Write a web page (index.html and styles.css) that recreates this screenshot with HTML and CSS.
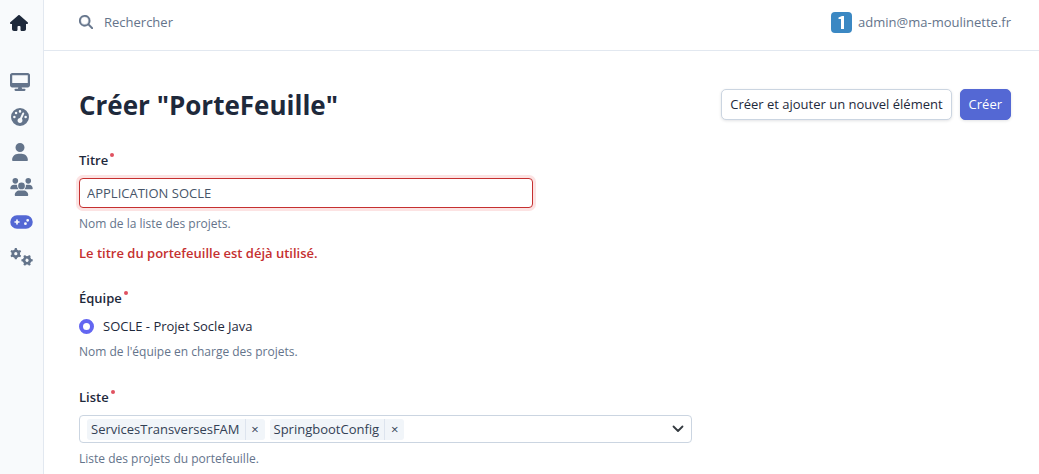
FILE: index.html
```html
<!DOCTYPE html>
<html lang="fr">
<head>
<meta charset="utf-8">
<meta name="viewport" content="width=device-width, initial-scale=1">
<title>Créer "PorteFeuille"</title>
<link rel="stylesheet" href="styles.css">
</head>
<body>
<div class="layout">
  <aside class="sidebar">
    <a class="home" href="#" aria-label="Accueil">
      <svg width="18" height="16" viewBox="0 0 576 512"><path d="M575.800 255.500c0 18-15 32.100-32 32.100h-32l.7 160.200c0 35-28 64.200-64 64.200H376c-22 0-40-18-40-40v-88c0-17.700-14.300-32-32-32h-32c-17.700 0-32 14.300-32 32v88c0 22-18 40-40 40h-72c-35 0-64-29-64-64V287.600H32c-18 0-32-14-32-32.100 0-9 3-17 10-24L266.400 8c7-7 15-8 22-8s15 2 21 7l255.400 224.500c8 7 12 15 11 24z"/></svg>
    </a>
    <nav class="menu">
      <a href="#" aria-label="Tableau de bord">
        <svg width="20" height="18" viewBox="0 0 576 512"><path fill-rule="evenodd" d="M64 0C29 0 0 29 0 64v288c0 35 29 64 64 64h176l-11 32h-69a32 32 0 0 0 0 64h256a32 32 0 0 0 0-64h-69l-11-32h176c35 0 64-29 64-64V64c0-35-29-64-64-64zM512 64v224H64V64z"/></svg>
      </a>
      <a href="#" aria-label="Indicateurs">
        <svg width="18" height="18" viewBox="0 0 512 512"><path fill-rule="evenodd" d="M0 256a256 256 0 1 1 512 0A256 256 0 1 1 0 256zM292 96a36 36 0 1 0-72 0 36 36 0 0 0 72 0zM256 424c40 0 70-32 70-70 0-17-6-33-16-45l64-143a28 28 0 0 0-51-23l-66 143c-40 0-71 30-71 68s30 70 70 70zM180 144a36 36 0 1 0-72 0 36 36 0 0 0 72 0zM96 292a36 36 0 1 0 0-72 36 36 0 0 0 0 72zm356-36a36 36 0 1 0-72 0 36 36 0 0 0 72 0z"/></svg>
      </a>
      <a href="#" aria-label="Utilisateur">
        <svg width="16" height="18" viewBox="0 0 448 512"><path d="M224 256a128 128 0 1 0 0-256 128 128 0 0 0 0 256zm-46 48C80 304 0 384 0 482c0 17 13 30 30 30h388c17 0 30-13 30-30 0-98-80-178-178-178z"/></svg>
      </a>
      <a class="wide" href="#" aria-label="Équipes">
        <svg width="23" height="18" viewBox="0 0 640 512"><path d="M144 0a80 80 0 1 1 0 160 80 80 0 0 1 0-160zm368 0a80 80 0 1 1 0 160 80 80 0 0 1 0-160zM0 299c0-59 48-107 107-107h43c16 0 31 4 45 10a129 129 0 0 0 40 118H21c-12 0-21-9-21-21zm405 21a128 128 0 0 0 40-118c14-6 29-10 45-10h43c59 0 107 48 107 107 0 12-9 21-21 21zM224 224a96 96 0 1 1 192 0 96 96 0 0 1-192 0zM128 485c0-73 60-133 133-133h118c73 0 133 60 133 133 0 15-12 27-27 27H155c-15 0-27-12-27-27z"/></svg>
      </a>
      <a class="wide active" href="#" aria-label="Portefeuilles" aria-current="page">
        <svg width="23" height="18" viewBox="0 0 640 512"><path fill-rule="evenodd" d="M192 64a192 192 0 0 0 0 384h256a192 192 0 0 0 0-384zM496 168a40 40 0 1 1 0 80 40 40 0 0 1 0-80zM392 304a40 40 0 1 1 80 0 40 40 0 0 1-80 0zM168 200c0-13 11-24 24-24s24 11 24 24v32h32c13 0 24 11 24 24s-11 24-24 24h-32v32c0 13-11 24-24 24s-24-11-24-24v-32h-32c-13 0-24-11-24-24s11-24 24-24h32z"/></svg>
      </a>
      <a class="wide" href="#" aria-label="Paramètres">
        <svg width="23" height="18" viewBox="0 0 640 512">
          <defs>
            <g id="gear">
              <circle r="84" fill="none" stroke="currentColor" stroke-width="76"/>
              <path id="teeth" d="M-38-100-28-160h56l10 60zM-38 100l10 60h56l10-60z"/>
              <use href="#teeth" transform="rotate(60)"/>
              <use href="#teeth" transform="rotate(120)"/>
            </g>
          </defs>
          <use href="#gear" transform="translate(158 162)"/>
          <use href="#gear" transform="translate(478 350) rotate(30)"/>
        </svg>
      </a>
    </nav>
  </aside>
  <div class="page">
    <header class="topbar">
      <form class="search">
        <label for="q" aria-label="Rechercher"><svg width="14" height="14" viewBox="0 0 512 512"><path fill-rule="evenodd" stroke="currentColor" stroke-width="12" d="M416 208c0 46-15 88-40 123l127 126a32 32 0 0 1-46 46L331 376A208 208 0 1 1 416 208zM208 352a144 144 0 1 0 0-288 144 144 0 0 0 0 288z"/></svg></label>
        <input id="q" type="search" placeholder="Rechercher">
      </form>
      <a class="user" href="#">
        <svg width="21" height="21" viewBox="0 0 21 21"><rect width="21" height="21" rx="4" fill="#3b88c3"/><path d="M7.500 5.500 11 4h2v13h-3V7H7.500z" fill="#fff"/></svg>
        <span>admin@ma-moulinette.fr</span>
      </a>
    </header>
    <main class="content">
      <div class="heading">
        <h1>Créer "PorteFeuille"</h1>
        <div class="actions">
          <button class="btn" type="submit" form="edit">Créer et ajouter un nouvel élément</button>
          <button class="btn primary" type="submit" form="edit">Créer</button>
        </div>
      </div>
      <form class="form" id="edit">
        <div class="field">
          <label class="label" for="titre">Titre</label>
          <input class="text invalid" id="titre" type="text" value="APPLICATION SOCLE">
          <p class="help">Nom de la liste des projets.</p>
          <p class="error">Le titre du portefeuille est déjà utilisé.</p>
        </div>
        <fieldset class="field">
          <legend class="label">Équipe</legend>
          <label class="choice"><input type="radio" name="equipe" checked><span>SOCLE - Projet Socle Java</span></label>
          <p class="help">Nom de l'équipe en charge des projets.</p>
        </fieldset>
        <div class="field">
          <label class="label" for="liste">Liste</label>
          <div class="picker">
            <span class="tag"><span>ServicesTransversesFAM</span><button type="button" aria-label="Retirer ServicesTransversesFAM">×</button></span>
            <span class="tag"><span>SpringbootConfig</span><button type="button" aria-label="Retirer SpringbootConfig">×</button></span>
            <input id="liste" type="text">
            <svg width="12" height="8" viewBox="0 0 12 8"><path d="m1.500 1.500 4.500 4.500 4.500-4.500" fill="none" stroke="#343a40" stroke-width="1.800" stroke-linecap="round" stroke-linejoin="round"/></svg>
          </div>
          <p class="help">Liste des projets du portefeuille.</p>
        </div>
      </form>
    </main>
  </div>
</div>
</body>
</html>
```
FILE: styles.css
```css
* { box-sizing: border-box; }
body {
  margin: 0;
  background: #fff;
  color: #1e293b;
  font: 13px/20px "Open Sans", "Noto Sans", sans-serif;
}
h1, p, fieldset, legend { margin: 0; padding: 0; border: 0; }
a { color: inherit; text-decoration: none; }
button, input { font: inherit; color: inherit; }
svg { display: block; flex: none; fill: currentColor; }

.layout { display: flex; min-height: 100vh; }
.sidebar {
  flex: none;
  width: 44px;
  padding: 15px 0 0 10px;
  background: #f8fafc;
  border-right: 1px solid #e2e8f0;
}
.home { display: block; color: #1e293b; }
.menu { display: grid; gap: 17px; margin-top: 42px; color: #64748b; }
.menu a { display: flex; width: 20px; justify-content: center; }
.menu .wide { justify-content: flex-start; }
.menu .active { color: #5468d4; }

.page { flex: 1; min-width: 0; }
.topbar {
  display: flex;
  align-items: center;
  justify-content: space-between;
  height: 51px;
  padding: 0 28px 6px 35px;
  border-bottom: 1px solid #e2e8f0;
  color: #64748b;
}
.search { display: flex; align-items: center; gap: 11px; }
.search input { border: 0; padding: 0; background: none; outline: 0; }
.search input::placeholder { color: #64748b; opacity: 1; }
.user { display: flex; align-items: center; gap: 6px; }

.content { padding: 36px 28px 8px 35px; }
.heading { display: flex; justify-content: space-between; align-items: center; }
h1 { font-size: 26px; line-height: 36px; font-weight: 700; }
.actions { display: flex; gap: 8px; padding-bottom: 2px; }
.btn {
  height: 31px;
  padding: 0 8px;
  border: 1px solid #cbd5e1;
  border-radius: 5px;
  background: #fff;
  box-shadow: 0 1px 3px #0f172a1f;
  white-space: nowrap;
}
.primary { background: #5468d4; border-color: #5468d4; color: #fff; }

.form { display: grid; gap: 25px; margin-top: 27px; }
.label { display: block; width: fit-content; margin-bottom: 8px; font-weight: 600; }
.label::after {
  content: "";
  display: inline-block;
  width: 4px;
  height: 4px;
  margin-left: 2px;
  border-radius: 50%;
  background: #e05260;
  vertical-align: 8px;
}
.text {
  display: block;
  width: 100%;
  max-width: 454px;
  height: 30px;
  padding: 0 7px;
  border: 1px solid #cbd5e1;
  border-radius: 4px;
  color: #475569;
}
.invalid { border-color: #c53030; box-shadow: 0 0 0 3px #fbdcdccc; outline: 0; }
.help { margin-top: 6px; font-size: 12px; color: #64748b; }
.error { margin-top: 9px; font-weight: 600; color: #c53030; }
.choice { display: flex; align-items: center; gap: 9px; width: fit-content; }
.choice input {
  appearance: none;
  width: 15px;
  height: 15px;
  margin: 0;
  border: 4px solid #6366f1;
  border-radius: 50%;
  background: #fff;
}
.picker {
  display: flex;
  align-items: center;
  gap: 5px;
  max-width: 613px;
  height: 28px;
  padding: 0 7px;
  border: 1px solid #cbd5e1;
  border-radius: 4px;
}
.picker input { flex: 1; min-width: 0; border: 0; padding: 0; outline: 0; }
.tag { display: flex; height: 21px; border-radius: 3px; background: #f1f5f9; color: #334155; }
.tag span { padding: 0 5px 0 4px; }
.tag button { width: 20px; padding: 0; border: 0; border-left: 1px solid #dde4ee; background: none; }
```
